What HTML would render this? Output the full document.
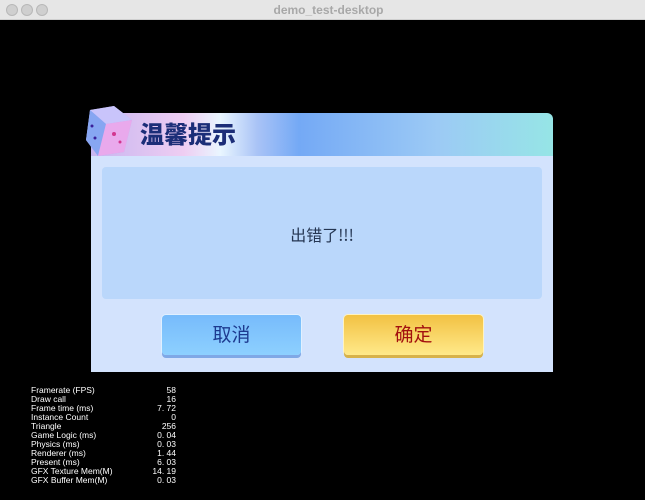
<!DOCTYPE html>
<html><head><meta charset="utf-8"><style>
*{margin:0;padding:0;box-sizing:border-box}
body{width:645px;height:500px;background:#000;position:relative;overflow:hidden;font-family:"Liberation Sans","Noto Sans CJK SC",sans-serif}
.tb{position:absolute;left:0;top:0;width:645px;height:20px;background:#e6e6e6;border-bottom:1px solid #cfcfcf}
.dot{position:absolute;top:4px;width:12px;height:12px;border-radius:50%;background:#cfcfcf;border:1px solid #b8b8b8}
.tt{position:absolute;left:0;width:645px;top:3px;text-align:center;font-size:12px;font-weight:bold;color:#a8a8a8;padding-left:12px}
.hdr{position:absolute;left:91px;top:113px;width:462px;height:43px;border-radius:0 6px 0 0;background:linear-gradient(90deg,#c7b6f0 0%,#eecdf2 20%,#e9f6ff 28%,#a9c3f6 36%,#74a9f5 45%,#9ccaf5 75%,#96e5e6 100%)}
.ttl{position:absolute;left:140px;top:116px;font-size:24px;font-weight:900;color:#1c2e78;font-family:"Noto Sans CJK SC",sans-serif;line-height:34px}
.dice{position:absolute;left:84px;top:104px;width:50px;height:52px}
.body{position:absolute;left:91px;top:156px;width:462px;height:216px;background:#d3e3fd}
.inner{position:absolute;left:102px;top:167px;width:440px;height:132px;background:#bad7fb;border-radius:4px}
.msg{position:absolute;left:102px;top:222px;width:440px;text-align:center;font-size:16px;color:#253652;font-family:"Noto Sans CJK SC",sans-serif}
.btn{position:absolute;top:315px;width:139px;height:40px;border-radius:4px;text-align:center;line-height:38px;font-size:19px;font-family:"Noto Sans CJK SC",sans-serif}
.c{left:162px;background:linear-gradient(#77bbfb,#8dd0ff);color:#1d3a8f;box-shadow:0 3px 0 #7fa8e6,0 0 0 1px #e0f0ff}
.o{left:344px;background:linear-gradient(#f2c143,#ffe98a);color:#a3100f;box-shadow:0 3px 0 #d7b24a,0 0 0 1px #fff3c0}
.st{position:absolute;left:31px;top:386px;font-size:8.5px;line-height:9px;color:#fff}
.sv{position:absolute;left:120px;width:56px;top:386px;font-size:8.5px;line-height:9px;color:#fff;text-align:right}
</style></head><body>
<div class="tb"><div class="dot" style="left:6px"></div><div class="dot" style="left:21px"></div><div class="dot" style="left:36px"></div><div class="tt">demo_test-desktop</div></div>
<div class="body"></div>
<div class="hdr"></div>
<svg class="dice" viewBox="0 0 50 52"><polygon points="6,6 30,2 48,16 40,48 14,52 2,36" fill="#b7a6f2"/><polygon points="6,6 30,2 48,16 22,20" fill="#c9c4fb"/><polygon points="6,6 22,20 14,52 2,36" fill="#87a6f2"/><polygon points="22,20 48,16 40,48 14,52" fill="#e9a9ec"/><circle cx="8" cy="22" r="1.5" fill="#3a1f99"/><circle cx="11" cy="34" r="1.5" fill="#3a1f99"/><circle cx="30" cy="30" r="2" fill="#d2368f"/><circle cx="36" cy="38" r="1.5" fill="#d2368f"/></svg>
<div class="ttl">温馨提示</div>
<div class="inner"></div>
<div class="msg">出错了!!!</div>
<div class="btn c">取消</div>
<div class="btn o">确定</div>
<div class="st">Framerate (FPS)<br>Draw call<br>Frame time (ms)<br>Instance Count<br>Triangle<br>Game Logic (ms)<br>Physics (ms)<br>Renderer (ms)<br>Present (ms)<br>GFX Texture Mem(M)<br>GFX Buffer Mem(M)</div>
<div class="sv">58<br>16<br>7. 72<br>0<br>256<br>0. 04<br>0. 03<br>1. 44<br>6. 03<br>14. 19<br>0. 03</div>
</body></html>
